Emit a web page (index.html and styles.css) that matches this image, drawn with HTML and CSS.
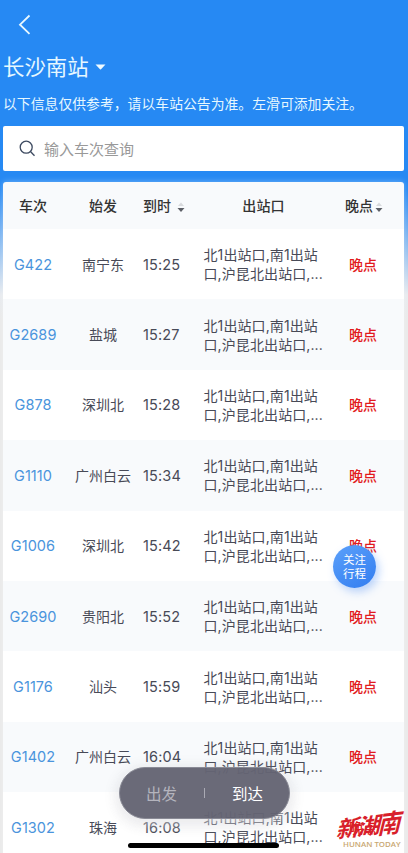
FILE: index.html
```html
<!DOCTYPE html>
<html lang="zh-CN">
<head>
<meta charset="utf-8">
<title>长沙南站</title>
<link rel="stylesheet" href="styles.css">
</head>
<body>
<main class="screen">
  <header class="top">
    <svg class="back" width="14" height="22" viewBox="0 0 14 22"><path d="M11.500 1.500 2 10.700l9.500 9.200" fill="none" stroke="#e9f8ff" stroke-width="1.8"/></svg>
    <h1 class="station">长沙南站<svg width="11" height="6" viewBox="0 0 11 6"><path d="M.5 .5h10L6 5.300q-.5.5-1 0z" fill="#f0fbff"/></svg></h1>
    <p class="notice">以下信息仅供参考，请以车站公告为准。左滑可添加关注。</p>
  </header>
  <div class="search">
    <svg width="17" height="17" viewBox="0 0 17 17"><g fill="none" stroke="#3d4a60" stroke-width="1.3"><circle cx="7.200" cy="7.200" r="6"/><path d="m11.700 11.700 3.800 4"/></g></svg>
    <span>输入车次查询</span>
  </div>
  <section class="board">
    <div class="row head">
      <span class="train">车次</span><span class="from">始发</span>
      <span class="time">到时<svg class="sort" width="8" height="11" viewBox="0 0 8 11"><path d="m1 4 3-3.500L7 4z" fill="#d8dadd"/><path d="M.5 6h7L4 10z" fill="#5c5f66"/></svg></span>
      <span class="exit">出站口</span>
      <span class="late">晚点<svg class="sort" width="8" height="11" viewBox="0 0 8 11"><path d="m1 4 3-3.500L7 4z" fill="#d8dadd"/><path d="M.5 6h7L4 10z" fill="#5c5f66"/></svg></span>
    </div>
    <div class="row"><span class="train">G422</span><span class="from">南宁东</span><span class="time">15:25</span><span class="exit">北1出站口,南1出站<br>口,沪昆北出站口,...</span><span class="late">晚点</span></div>
    <div class="row"><span class="train">G2689</span><span class="from">盐城</span><span class="time">15:27</span><span class="exit">北1出站口,南1出站<br>口,沪昆北出站口,...</span><span class="late">晚点</span></div>
    <div class="row"><span class="train">G878</span><span class="from">深圳北</span><span class="time">15:28</span><span class="exit">北1出站口,南1出站<br>口,沪昆北出站口,...</span><span class="late">晚点</span></div>
    <div class="row"><span class="train">G1110</span><span class="from">广州白云</span><span class="time">15:34</span><span class="exit">北1出站口,南1出站<br>口,沪昆北出站口,...</span><span class="late">晚点</span></div>
    <div class="row"><span class="train">G1006</span><span class="from">深圳北</span><span class="time">15:42</span><span class="exit">北1出站口,南1出站<br>口,沪昆北出站口,...</span><span class="late">晚点</span></div>
    <div class="row"><span class="train">G2690</span><span class="from">贵阳北</span><span class="time">15:52</span><span class="exit">北1出站口,南1出站<br>口,沪昆北出站口,...</span><span class="late">晚点</span></div>
    <div class="row"><span class="train">G1176</span><span class="from">汕头</span><span class="time">15:59</span><span class="exit">北1出站口,南1出站<br>口,沪昆北出站口,...</span><span class="late">晚点</span></div>
    <div class="row"><span class="train">G1402</span><span class="from">广州白云</span><span class="time">16:04</span><span class="exit">北1出站口,南1出站<br>口,沪昆北出站口,...</span><span class="late">晚点</span></div>
    <div class="row"><span class="train">G1302</span><span class="from">珠海</span><span class="time">16:08</span><span class="exit">北1出站口,南1出站<br>口,沪昆北出站口,...</span><span class="late">晚点</span></div>
  </section>
  <div class="follow">关注<br>行程</div>
  <nav class="switch"><span>出发</span><i></i><span class="active">到达</span></nav>
  <div class="home"></div>
  <div class="brand"><div class="brand-cn"><span>新</span><span>湖</span><span>南</span></div><div class="brand-en">HUNAN TODAY</div></div>
</main>
</body>
</html>
```
FILE: styles.css
```css
* { box-sizing: border-box; }
body { margin: 0; font-family: Inter, "Noto Sans CJK SC", sans-serif; }
.screen {
  position: relative;
  width: 408px;
  height: 853px;
  overflow: hidden;
  background: linear-gradient(#2689f3 0, #2689f3 190px, #79b3f1 235px, #e7eaee 295px, #e9e9e9 320px);
}
.top { height: 126px; padding: 14px 3px 0; color: #e6f8ff; }
.back { display: block; margin-left: 15px; }
.station {
  display: flex;
  align-items: center;
  gap: 6px;
  height: 30px;
  margin: 14px 0 0;
  font-size: 21.4px;
  font-weight: 400;
}
.station svg { margin-top: 3px; }
.notice { margin: 14px 0 0; font-size: 13.85px; line-height: 20px; white-space: nowrap; }
.search {
  display: flex;
  align-items: center;
  gap: 8px;
  width: 401px;
  height: 45px;
  margin-left: 3px;
  padding: 0 0 1px 16px;
  border-radius: 2px;
  background: #fff;
  color: #999;
  font-size: 15px;
}
.board {
  width: 401px;
  margin: 11px 0 0 3px;
  border-radius: 3px 3px 0 0;
  overflow: hidden;
  box-shadow: 0 0 6px rgba(255, 255, 255, .35);
}
.row {
  display: grid;
  grid-template-columns: 60px 80px 38px 164px 59px;
  align-items: center;
  height: 70.4px;
  background: #fff;
  color: #484a57;
  font-size: 14px;
  line-height: 19px;
  white-space: nowrap;
}
.row:nth-child(odd) { background: #f8fafc; }
.row.head { height: 47px; color: #333; font-weight: 500; }
.train { text-align: center; color: #4a94dc; font-size: 14.5px; letter-spacing: .05px; }
.head .train { color: #333; font-size: 14px; }
.from { text-align: center; }
.time { font-size: 14.5px; letter-spacing: .15px; }
.head .time { font-size: 14px; letter-spacing: 0; }
.exit { padding: 0 0 0 22.5px; letter-spacing: .1px; }
.head .exit { padding: 0 0 0 1px; text-align: center; }
.late { padding-left: 4px; color: #e21b20; font-weight: 500; }
.head .late { padding: 0; color: #333; }
.sort { margin-left: 6px; vertical-align: -2px; }
.late .sort { margin-left: 2px; }
.follow {
  position: absolute;
  left: 333px;
  top: 545px;
  width: 43px;
  height: 43px;
  padding-top: 9px;
  border-radius: 50%;
  background: linear-gradient(145deg, #5ba0fa, #327df0);
  box-shadow: 3px 4px 9px rgba(65, 135, 245, .35);
  color: #fff;
  font-size: 11.5px;
  line-height: 13.5px;
  text-align: center;
}
.switch {
  position: absolute;
  left: 119px;
  top: 767px;
  display: flex;
  align-items: center;
  justify-content: space-between;
  width: 171px;
  height: 52px;
  padding: 0 26px;
  border: 1px solid #898a95;
  border-radius: 26px;
  background: rgba(101, 101, 115, .965);
  box-shadow: 0 5px 12px rgba(238, 238, 241, .65), 0 3px 16px rgba(60, 60, 75, .15);
  color: #b4b4bd;
  font-size: 15.5px;
}
.switch i { width: 1px; height: 10px; background: #aaaab4; }
.switch .active { color: #fff; }
.home {
  position: absolute;
  left: 128px;
  top: 843px;
  width: 151px;
  height: 5px;
  border-radius: 3px;
  background: #000;
}
.brand { position: absolute; left: 338px; top: 809px; width: 66px; }
.brand-cn {
  display: flex;
  height: 31px;
  color: #d81f2b;
  font-family: "Noto Sans CJK SC", sans-serif;
  font-size: 23px;
  font-weight: 700;
  line-height: 31px;
  transform: skew(-14deg, -7deg);
}
.brand-cn span { width: 21px; }
.brand-cn span:last-child { transform: scaleY(1.15); }
.brand-en {
  margin-left: 5px;
  color: #c9a873;
  font-family: "Open Sans", sans-serif;
  font-size: 7.9px;
  font-weight: 600;
  line-height: 9px;
  white-space: nowrap;
}
```
